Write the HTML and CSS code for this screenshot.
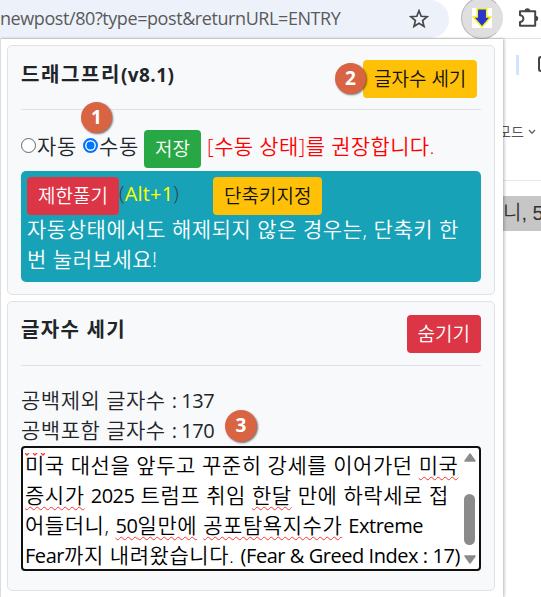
FILE: index.html
```
<!DOCTYPE html>
<html lang="ko">
<head>
    <meta charset="UTF-8">
    <meta name="viewport" content="width=device-width, initial-scale=1.0">
    <title>드래그프리</title>
    <link rel="stylesheet" href="styles.css">
</head>
<body>
    <!-- Browser toolbar -->
    <div class="toolbar">
        <div class="address-bar">
            <span class="url">newpost/80?type=post&amp;returnURL=ENTRY</span>
            <svg class="star" width="20" height="20" viewBox="0 0 20 20">
                <path d="M10 1.8 L12.2 7.3 L18.2 7.7 L13.6 11.6 L15 17.4 L10 14.2 L5 17.4 L6.4 11.6 L1.8 7.7 L7.8 7.3 Z" fill="none" stroke="#474747" stroke-width="1.7"/>
            </svg>
        </div>
        <div class="ext-icon">
            <svg width="20" height="20" viewBox="0 0 20 20">
                <rect width="20" height="20" fill="#fff"/>
                <path d="M5.3 .8 H14.7 V9 H18.7 L10 19 L1.3 9 H5.3 Z" fill="#2a35cc" stroke="#f5f01c" stroke-width="1.5"/>
            </svg>
        </div>
        <svg class="puzzle" width="23" height="22" viewBox="0 0 23 22">
            <path d="M3 4.2 H18.2 V18.8 H3 V15 A3.3 3.3 0 0 0 3 8.2 Z" fill="none" stroke="#474747" stroke-width="2" stroke-linejoin="round"/>
            <path d="M7.6 4 A2.8 2.8 0 0 1 13.2 4 Z M18.5 8.8 A2.7 2.7 0 0 1 18.5 14.2 Z" fill="#474747"/>
        </svg>
    </div>

    <!-- Page behind the popup -->
    <div class="page">
        <div class="page-tools">
            <span class="blue-mark"></span>
            <span class="box-mark"></span>
        </div>
        <div class="page-mode"><span>모드</span>
            <svg width="8" height="6" viewBox="0 0 8 6"><path d="M1 1 L4 4.3 L7 1" fill="none" stroke="#666" stroke-width="1.3"/></svg>
        </div>
        <div class="page-selection">니, 5</div>
    </div>

    <!-- Extension popup -->
    <div class="popup">
        <div class="card card-main">
            <div class="card-head">
                <h5 class="title">드래그프리<span class="latin">(v8.1)</span></h5>
                <button class="btn btn-warning btn-count">글자수 세기</button>
            </div>
            <hr>
            <div class="mode-row">
                <span class="radio"></span><span class="label-auto">자동</span>
                <span class="radio checked"></span><span class="label-manual">수동</span>
                <button class="btn btn-success">저장</button>
                <span class="notice">[수동 상태]를 권장합니다.</span>
            </div>
            <div class="info-box">
                <div class="info-row">
                    <button class="btn btn-danger">제한풀기</button>
                    <span class="shortcut">(<b>Alt+1</b>)</span>
                    <button class="btn btn-warning">단축키지정</button>
                </div>
                <div class="info-text">자동상태에서도 해제되지 않은 경우는, 단축키 한</div>
                <div class="info-text">번 눌러보세요!</div>
            </div>
        </div>

        <div class="card card-count">
            <div class="card-head">
                <h5 class="title">글자수 세기</h5>
                <button class="btn btn-danger">숨기기</button>
            </div>
            <hr>
            <div class="counts">
                <div class="count">공백제외 글자수 <span class="latin">: 137</span></div>
                <div class="count">공백포함 글자수 <span class="latin">: 170</span></div>
            </div>
            <div class="editor">
                <div class="editor-text">
                    <div class="prev-line">
                        <svg width="20" height="3" viewBox="0 0 20 3"><path d="M0 0 L2 2 L4 0 M8 0 L10 2 L12 0 M16 0 L18 2 L20 0" fill="none" stroke="#f33" stroke-width="1.3"/></svg>
                    </div>
                    <div class="line l1">미국 대선을 앞두고 꾸준히 강세를 이어가던 <u>미국</u></div>
                    <div class="line l2"><u>증시가</u> <span class="latin">2025</span> 트럼프 취임 <u>한달</u> 만에 하락세로 접</div>
                    <div class="line l3">어들더니, <u><span class="latin">50</span>일만에</u> <u>공포탐욕지수가</u> <span class="latin">Extreme</span></div>
                    <div class="line l4"><span class="latin">Fear</span>까지 내려왔습니다. <span class="latin">(Fear &amp; Greed Index : 17)</span></div>
                </div>
                <div class="scrollbar">
                    <svg width="12" height="9" viewBox="0 0 12 9"><path d="M6 1 L11 8 H1 Z" fill="#8b8b8b" stroke="#8b8b8b" stroke-width="1.5" stroke-linejoin="round"/></svg>
                    <span class="thumb"></span>
                    <svg width="12" height="9" viewBox="0 0 12 9"><path d="M6 8 L11 1 H1 Z" fill="#8b8b8b" stroke="#8b8b8b" stroke-width="1.5" stroke-linejoin="round"/></svg>
                </div>
            </div>
        </div>
    </div>

    <!-- Step badges -->
    <span class="badge badge-1">1</span>
    <span class="badge badge-2">2</span>
    <span class="badge badge-3">3</span>
</body>
</html>
```
FILE: styles.css
```
* {
    box-sizing: border-box;
}
body {
    margin: 0;
    width: 541px;
    height: 597px;
    overflow: hidden;
    position: relative;
    background: #fff;
    color: #212529;
    font-family: "Open Sans", "Noto Sans CJK KR", sans-serif;
    font-size: 21px;
    font-weight: 350;
    line-height: 30px;
    white-space: nowrap;
}

/* toolbar */
.toolbar {
    display: flex;
    height: 39px;
    border-bottom: 1px solid #dfe1e5;
}
.address-bar {
    display: flex;
    align-items: center;
    justify-content: space-between;
    width: 449px;
    height: 38px;
    padding-right: 20px;
    background: #edf2fa;
    border-radius: 0 19px 19px 0;
}
.url {
    font-family: "Open Sans", sans-serif;
    font-size: 18px;
    font-weight: 400;
    color: #5a5a5a;
    letter-spacing: -0.42px;
    margin-top: -2px;
}
.ext-icon {
    display: flex;
    align-items: center;
    justify-content: center;
    width: 42px;
    height: 42px;
    margin: -3px 0 0 12px;
    border-radius: 50%;
    border: 1px solid #b5b5b5;
    border-right-color: #ddd;
    background: #dfdfdf;
}
.puzzle {
    flex: none;
    margin: 7px 0 0 14px;
}

/* page behind */
.page {
    margin-left: 503px;
}
.page-tools {
    display: flex;
    justify-content: space-between;
    padding: 16px 0 0 13px;
    height: 80px;
}
.blue-mark {
    width: 3px;
    height: 20px;
    background: #d3e3fd;
}
.box-mark {
    width: 3px;
    height: 16px;
    margin-top: 1px;
    border: 2px solid #444;
    border-right: 0;
    border-radius: 3px 0 0 3px;
}
.page-mode {
    display: flex;
    align-items: center;
    gap: 4px;
    height: 62px;
    padding-bottom: 36px;
    border-bottom: 1px solid #e8e8e8;
    font-size: 14px;
    font-weight: 400;
    line-height: 26px;
    color: #555;
}
.page-mode span {
    margin-left: -5px;
}
.page-selection {
    height: 35px;
    margin-top: 15px;
    background: #c6c6c6;
    font-family: "Liberation Sans", "Noto Sans CJK KR", sans-serif;
    font-size: 20px;
    line-height: 34px;
    color: #333;
}

/* popup */
.popup {
    position: absolute;
    left: 0;
    top: 39px;
    width: 503px;
    height: 558px;
    padding: 6px 8px 0 6px;
    background: #fff;
    border-left: 1px solid #ddd;
    box-shadow: 1px 0 3px rgba(0, 0, 0, 0.3);
}
.card {
    width: 488px;
    padding: 14px 13px 0;
    background: #f8f9fb;
    border: 1px solid #dee2e6;
    border-radius: 5px;
}
.card-main {
    height: 250px;
    margin-bottom: 6px;
}
.card-count {
    height: 290px;
    padding-top: 13px;
}
.card-head {
    display: flex;
    justify-content: space-between;
    height: 38px;
}
.title {
    margin: 0;
    font-size: 20px;
    font-weight: 700;
    letter-spacing: 1.6px;
}
.card-count .title {
    letter-spacing: 1.3px;
}
.title .latin {
    font-size: 19px;
    font-weight: 700;
    letter-spacing: 0.4px;
}
hr {
    height: 1px;
    margin: 11px 0 20px;
    border: 0;
    background: #dee2e6;
}
.card-count hr {
    margin-top: 12px;
}
.btn {
    height: 38px;
    padding: 0 11px;
    border: 0;
    border-radius: 4px;
    font-family: inherit;
    font-size: 19px;
    font-weight: 350;
    line-height: 38px;
    color: #fff;
}
.btn-warning {
    background: #ffc107;
    color: #111;
}
.btn-success {
    background: #28a745;
}
.btn-danger {
    background: #dc3545;
}
.btn-count {
    width: 114px;
    margin-right: 4px;
}
.mode-row {
    display: flex;
    align-items: center;
    height: 38px;
    letter-spacing: 0.7px;
}
.mode-row .btn {
    width: 57px;
}
.mode-row > .label-auto,
.mode-row > .label-manual,
.mode-row > .notice {
    margin-top: -7px;
}
.radio {
    width: 15px;
    height: 15px;
    margin: -7px 1px 0 0;
    border: 1px solid #666;
    border-radius: 50%;
    background: #fff;
}
.radio.checked {
    margin-left: 6px;
    border: 2px solid #0075ff;
    background: #0075ff;
    box-shadow: inset 0 0 0 1.5px #fff;
}
.label-manual {
    margin-right: 5px;
}
.notice {
    margin-left: 6px;
    color: #f00;
    letter-spacing: 0.35px;
}
.info-box {
    height: 111px;
    margin-top: 3px;
    padding: 6px;
    background: #17a2b8;
    border-radius: 5px;
    color: #fff;
}
.info-row {
    display: flex;
    align-items: center;
}
.info-row .btn-danger {
    width: 92px;
}
.info-row .btn-warning {
    width: 109px;
}
.shortcut {
    width: 94px;
    margin-top: -4px;
    font-size: 20px;
    color: #343a40;
    letter-spacing: 0.2px;
}
.shortcut b {
    color: #ff0;
    font-weight: 500;
}
.info-text {
    height: 30px;
    line-height: 29px;
    letter-spacing: 0.53px;
}
.counts {
    letter-spacing: 0.5px;
}
.count {
    height: 30px;
    line-height: 28px;
}
.latin {
    font-family: "Open Sans", sans-serif;
    font-size: 20px;
    font-weight: 370;
    letter-spacing: -0.45px;
}

/* textarea with its scrollbar */
.editor {
    display: flex;
    height: 125px;
    border: 2px solid #101010;
    border-radius: 4px;
    background: #fff;
    overflow: hidden;
    color: #000;
}
.editor-text {
    flex: 1;
    padding-left: 2px;
    letter-spacing: 0.55px;
}
.line {
    height: 30px;
    line-height: 28px;
}
.prev-line {
    height: 3px;
    line-height: 0;
}
.editor u {
    text-decoration: underline wavy #f33 1.3px;
    text-underline-offset: 3px;
}
.scrollbar {
    display: flex;
    flex-direction: column;
    align-items: center;
    width: 15px;
    padding: 5px 0 4px;
    margin-right: 2px;
}
.thumb {
    width: 11px;
    height: 51px;
    margin: 32px 0 10px;
    border-radius: 6px;
    background: #8b8b8b;
}

/* badges */
.badge {
    position: absolute;
    width: 31px;
    height: 31px;
    border-radius: 50%;
    background: #d96444;
    box-shadow: 1px 1px 2px rgba(0, 0, 0, 0.55);
    color: #fff;
    font-family: "Noto Sans", sans-serif;
    font-size: 19px;
    font-weight: 700;
    line-height: 31px;
    text-align: center;
}
.badge-1 {
    left: 81px;
    top: 102px;
}
.badge-2 {
    left: 335px;
    top: 63px;
}
.badge-3 {
    left: 225px;
    top: 410px;
    width: 32px;
    height: 32px;
}
```
